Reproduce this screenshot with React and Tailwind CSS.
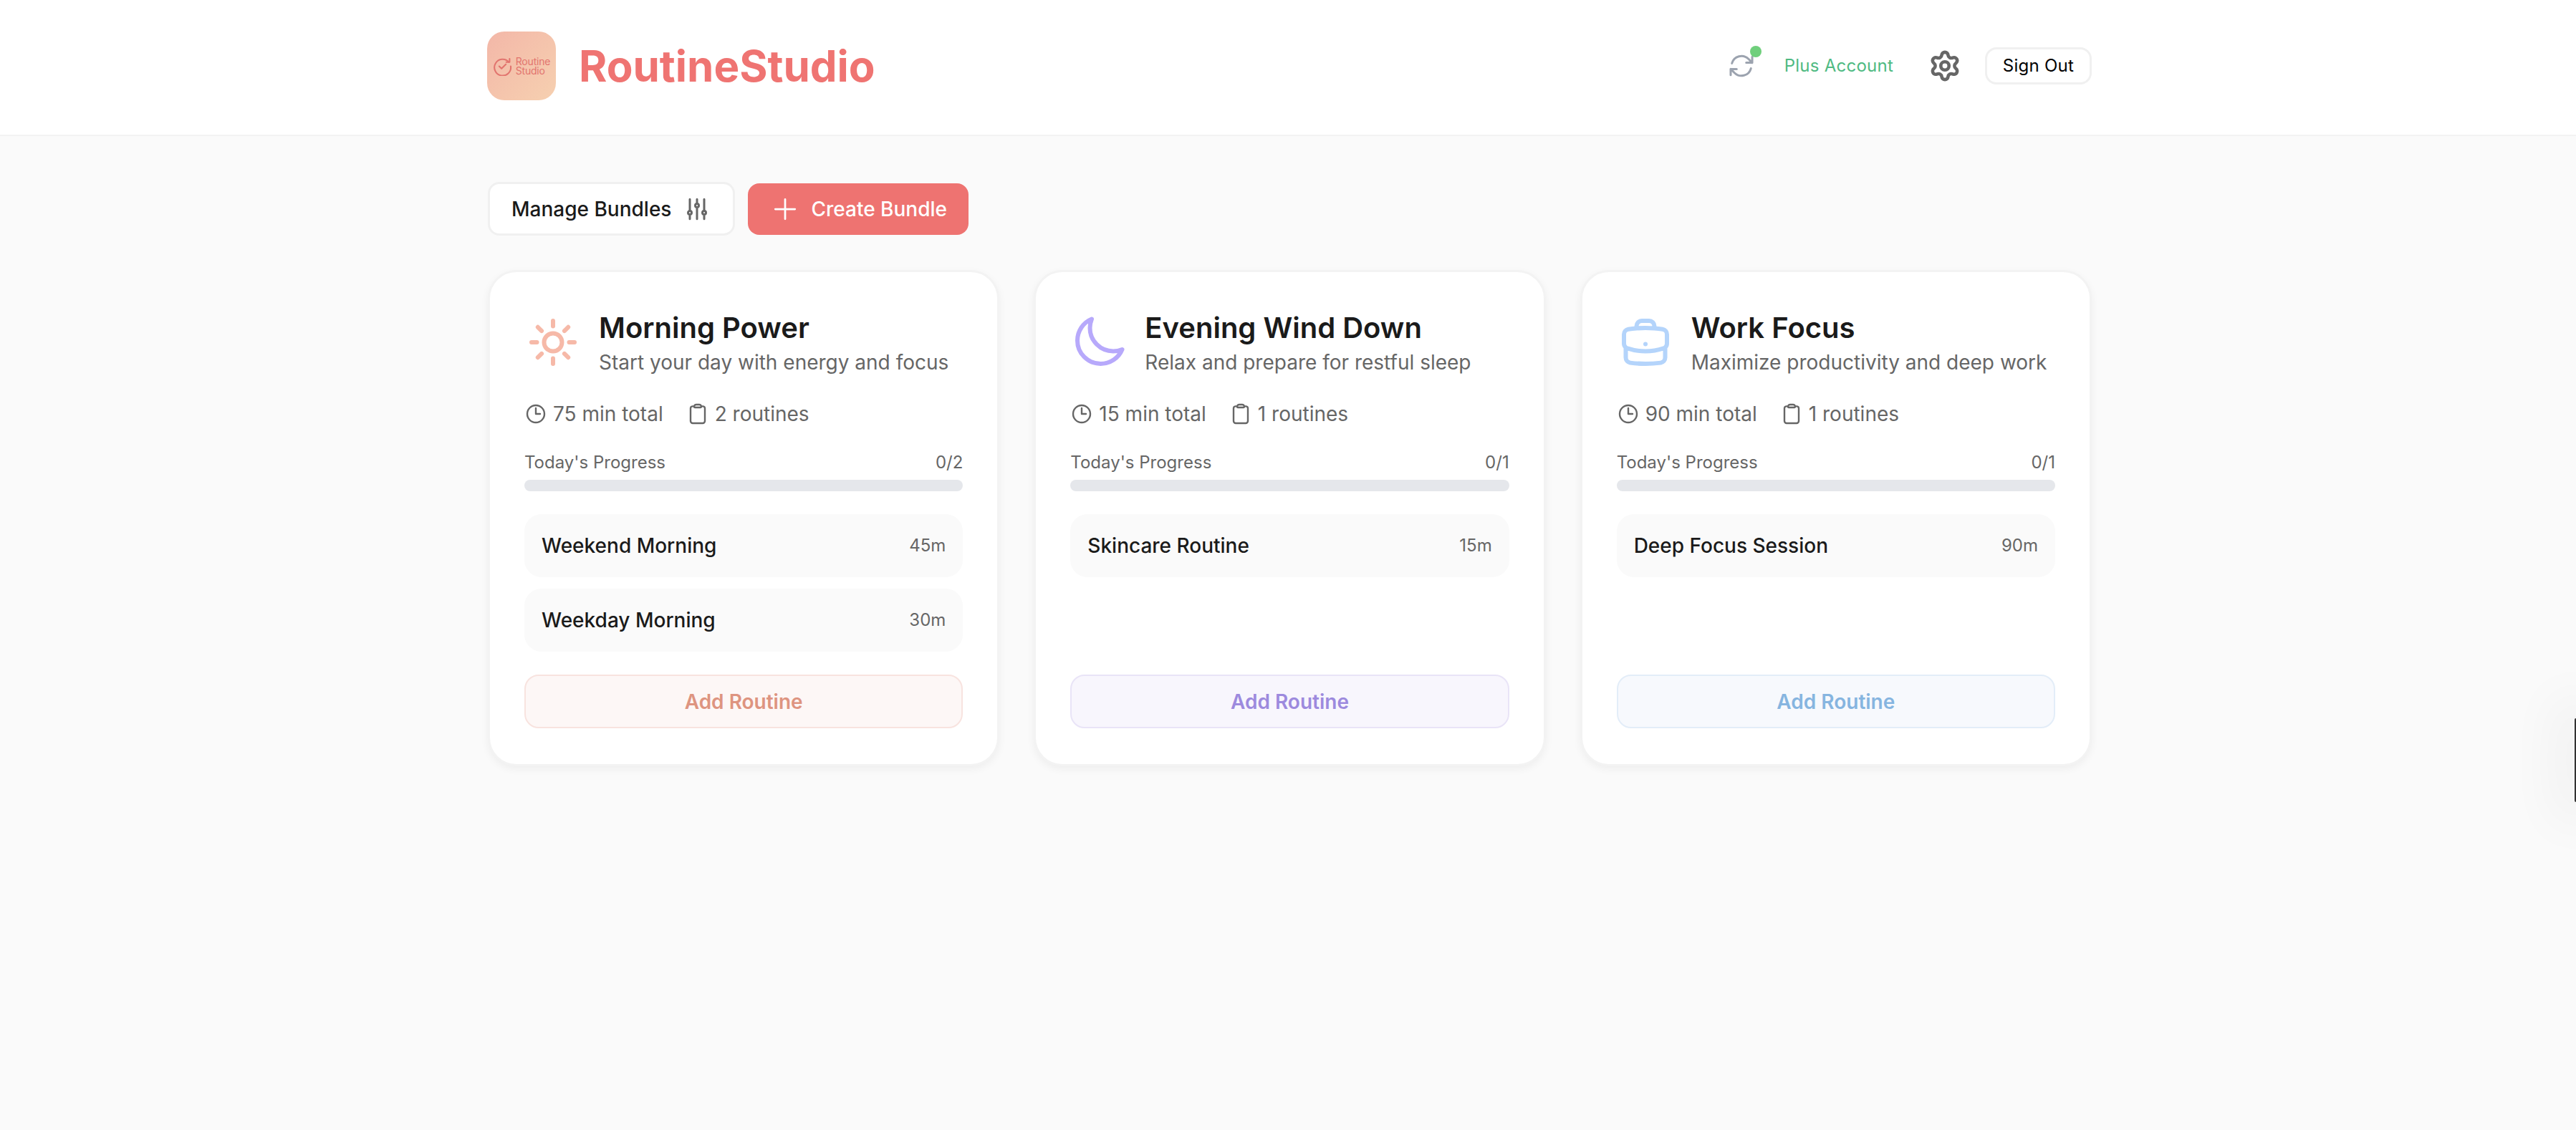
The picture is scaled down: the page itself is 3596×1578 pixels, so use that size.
import React from 'react';
import { Settings } from 'lucide-react';
import {
  HiOutlineAdjustmentsVertical,
  HiOutlineArrowPath,
  HiOutlineBriefcase,
  HiOutlineClipboard,
  HiOutlineClock,
  HiOutlineMoon,
  HiOutlinePlus,
  HiOutlineSun,
} from 'react-icons/hi2';

const bundles = [
  {
    title: 'Morning Power',
    description: 'Start your day with energy and focus',
    Icon: HiOutlineSun,
    iconClass: 'text-[#f6b9a8]',
    total: '75 min total',
    count: '2 routines',
    progress: '0/2',
    routines: [
      { name: 'Weekend Morning', time: '45m' },
      { name: 'Weekday Morning', time: '30m' },
    ],
    addClass: 'bg-[#fdf7f6] border-[#f8e3df] text-[#de9480]',
  },
  {
    title: 'Evening Wind Down',
    description: 'Relax and prepare for restful sleep',
    Icon: HiOutlineMoon,
    iconClass: 'text-[#b7a9fb]',
    total: '15 min total',
    count: '1 routines',
    progress: '0/1',
    routines: [{ name: 'Skincare Routine', time: '15m' }],
    addClass: 'bg-[#f8f6fd] border-[#e9e4f7] text-[#9d8ade]',
  },
  {
    title: 'Work Focus',
    description: 'Maximize productivity and deep work',
    Icon: HiOutlineBriefcase,
    iconClass: 'text-[#b4d4fb]',
    total: '90 min total',
    count: '1 routines',
    progress: '0/1',
    routines: [{ name: 'Deep Focus Session', time: '90m' }],
    addClass: 'bg-[#f7f9fd] border-[#e3edf8] text-[#86b5e0]',
  },
];

const LogoMark = () => (
  <svg viewBox="0 0 26 26" className="w-[27px] h-[27px] shrink-0" fill="none" stroke="currentColor" strokeWidth="2" strokeLinecap="round" strokeLinejoin="round">
    <path d="M21.5 7.5A11 11 0 1 0 24 13" />
    <path d="M18 7.5h4.5V3" />
    <path d="M8.5 13l3.2 3.2 5.8-5.8" />
  </svg>
);

const Card = ({ bundle }) => {
  const { Icon } = bundle;
  return (
    <div className="flex flex-col bg-white border-[3px] border-[#f3f3f3] rounded-[40px] px-12 py-[50px] shadow-[0_4px_12px_rgba(0,0,0,0.05)]">
      <div className="flex items-center gap-6 mb-8">
        <Icon className={`w-20 h-20 shrink-0 ${bundle.iconClass}`} strokeWidth={1.8} />
        <div>
          <h2 className="text-[40px] leading-[56px] font-semibold text-[#1a1a1a]">{bundle.title}</h2>
          <p className="text-[28px] leading-10 text-[#666666]">{bundle.description}</p>
        </div>
      </div>

      <div className="flex items-center gap-8 text-[28px] leading-10 text-[#666666] mb-8">
        <span className="flex items-center gap-2">
          <HiOutlineClock className="w-8 h-8" strokeWidth={1.8} />
          {bundle.total}
        </span>
        <span className="flex items-center gap-2">
          <HiOutlineClipboard className="w-8 h-8" strokeWidth={1.8} />
          {bundle.count}
        </span>
      </div>

      <div className="flex items-center justify-between text-2xl leading-8 text-[#666666] mb-2">
        <span>Today's Progress</span>
        <span>{bundle.progress}</span>
      </div>
      <div className="h-4 rounded-full bg-[#e5e7eb] mb-8"></div>

      <div className="flex flex-col gap-4 flex-1 mb-8">
        {bundle.routines.map((routine) => (
          <div key={routine.name} className="flex items-center justify-between h-[88px] px-6 rounded-3xl bg-[#fafafa]">
            <span className="text-[28px] font-medium text-[#1a1a1a]">{routine.name}</span>
            <span className="text-2xl text-[#666666]">{routine.time}</span>
          </div>
        ))}
      </div>

      <button className={`h-[75px] rounded-[20px] border-2 text-[28px] font-semibold ${bundle.addClass}`}>
        Add Routine
      </button>
    </div>
  );
};

export default function App() {
  return (
    <div className="min-h-screen bg-[#fafafa] font-['Inter',sans-serif] overflow-hidden">
      <header className="h-[190px] bg-white border-b-2 border-[#f3f3f3]">
        <div className="flex items-center justify-between h-[184px] w-[2239px] ml-[681px]">
          <div className="flex items-center gap-8">
            <div className="flex items-center justify-center gap-[5px] -ml-px w-24 h-24 rounded-3xl bg-gradient-to-br from-[#f3b7a8] to-[#f6d0b0] text-[#e2746e]">
              <LogoMark />
              <span className="text-[14px] leading-[13px] -tracking-[0.2px] font-normal">Routine<br />Studio</span>
            </div>
            <h1 className="text-[60px] leading-none font-bold text-[#ef7472]">RoutineStudio</h1>
          </div>

          <div className="flex items-center">
            <div className="relative w-10 h-10 mr-10">
              <HiOutlineArrowPath className="w-10 h-10 text-[#9ca3af]" strokeWidth={1.8} />
              <span className="absolute -top-[8px] -right-[8px] w-4 h-4 rounded-full bg-[#6fcf7c]"></span>
            </div>
            <span className="text-2xl font-normal tracking-[0.25px] text-[#4fba82] mr-[49px]">Plus Account</span>
            <Settings className="w-[46px] h-[46px] text-[#666666] mr-[33px]" strokeWidth={2.4} />
            <button className="w-[149px] h-[52px] rounded-2xl border-[3px] border-[#f0f0f0] bg-white text-2xl font-normal tracking-[0.25px] text-black">
              Sign Out
            </button>
          </div>
        </div>
      </header>

      <main className="w-[2239px] ml-[681px] pt-16">
        <div className="flex items-center gap-[18px] mb-12">
          <button className="flex items-center gap-4 h-[75px] px-[30px] rounded-2xl border-[3px] border-[#f0f0f0] bg-white text-[28px] font-medium text-[#1a1a1a]">
            Manage Bundles
            <HiOutlineAdjustmentsVertical className="w-10 h-10 text-[#666666]" strokeWidth={1.8} />
          </button>
          <button className="flex items-center gap-[14px] h-[72px] px-[30px] rounded-2xl bg-[#ee7371] text-[28px] font-medium text-white">
            <HiOutlinePlus className="w-11 h-11" />
            Create Bundle
          </button>
        </div>

        <div className="grid grid-cols-3 gap-12">
          {bundles.map((bundle) => (
            <Card key={bundle.title} bundle={bundle} />
          ))}
        </div>
      </main>

      {/* edge of a panel sliding in from the right */}
      <div className="fixed right-0 top-[1003px] w-[2px] h-[117px] rounded-l-sm bg-[#333333] shadow-[0_0_70px_30px_rgba(0,0,0,0.04)]"></div>
    </div>
  );
}
